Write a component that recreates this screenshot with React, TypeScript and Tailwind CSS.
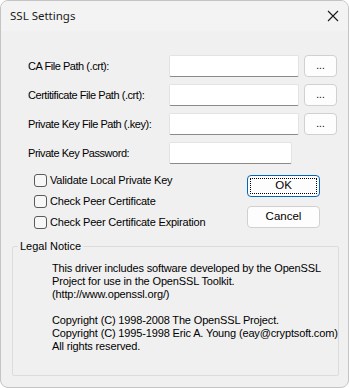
import React from "react";

const fieldRows = [
    { label: "CA File Path (.crt):", browse: true },
    { label: "Certitificate File Path (.crt):", browse: true },
    { label: "Private Key File Path (.key):", browse: true },
    { label: "Private Key Password:", browse: false },
];

const checks = [
    "Validate Local Private Key",
    "Check Peer Certificate",
    "Check Peer Certificate Expiration",
];

const legalLines = [
    "This driver includes software developed by the OpenSSL",
    "Project for use in the OpenSSL Toolkit.",
    "(http://www.openssl.org/)",
    "",
    "Copyright (C) 1998-2008 The OpenSSL Project.",
    "Copyright (C) 1995-1998 Eric A. Young (eay@cryptsoft.com)",
    "All rights reserved.",
];

const App = () => {
    return (
        <div className="w-[349px] h-[388px] bg-white">
            <div
                className="w-[349px] h-[388px] flex flex-col border border-[#c4c4c4] rounded-[8px] overflow-hidden bg-[#f0f0f0] text-[11px] text-black"
                style={{ fontFamily: '"Liberation Sans", Arial, sans-serif' }}
            >
                {/* title bar */}
                <div className="h-[30px] shrink-0 flex items-center justify-between bg-[#f3f3f3] pl-[9px] pr-[7px]">
                    <span className="text-[11.5px] text-[#1a1a1a]" style={{ fontFamily: '"Noto Sans", sans-serif' }}>SSL Settings</span>
                    <svg width="16" height="16" viewBox="0 0 16 16" className="text-[#1a1a1a]">
                        <path d="M3 3 L13 13 M13 3 L3 13" stroke="currentColor" strokeWidth="1.1" fill="none" />
                    </svg>
                </div>

                <div className="flex flex-col pt-[24px] pl-[27px]">
                    <div className="flex flex-col gap-[7px]">
                        {fieldRows.map((row) => (
                            <div key={row.label} className="flex items-center h-[22px]">
                                <span className="w-[141px] shrink-0 whitespace-nowrap tracking-[-0.45px]">{row.label}</span>
                                <div className={`${row.browse ? "w-[130px]" : "w-[123px]"} h-[22px] bg-white border border-[#e3e3e3] border-b-[#8a8a8a] rounded-[2px]`} />
                                {row.browse && (
                                    <div className="ml-[5px] w-[33px] h-[22px] flex items-center justify-center bg-[#fdfdfd] border border-[#d0d0d0] rounded-[4px] text-[10px] pb-[2px]">
                                        ...
                                    </div>
                                )}
                            </div>
                        ))}
                    </div>

                    <div className="flex mt-[6px]">
                        <div className="flex flex-col pl-[6px] w-[219px]">
                            {checks.map((c) => (
                                <div key={c} className="flex items-center h-[21px]">
                                    <div className="w-[13px] h-[13px] border border-[#5a5a5a] rounded-[3px] bg-[#f7f7f7]" />
                                    <span className="ml-[3px] whitespace-nowrap tracking-[-0.2px]">{c}</span>
                                </div>
                            ))}
                        </div>
                        <div className="flex flex-col gap-[9px] pt-[5px]">
                            <div className="w-[73px] h-[22px] border border-[#0067c0] rounded-[4px] bg-[#fdfdfd] p-[2px]">
                                <div className="w-full h-full border border-dotted border-black flex items-center justify-center text-[11.5px]">
                                    OK
                                </div>
                            </div>
                            <div className="w-[73px] h-[22px] border border-[#d0d0d0] rounded-[4px] bg-[#fdfdfd] flex items-center justify-center text-[11.5px]">
                                Cancel
                            </div>
                        </div>
                    </div>
                </div>

                <fieldset className="mx-[11px] mt-[7px] h-[136px] border border-[#dcdcdc] rounded-[2px]">
                    <legend className="ml-[5px] px-[2px] leading-[13px]">Legal Notice</legend>
                    <div className="flex flex-col pl-[39px] pt-[9px] leading-[13px] tracking-[-0.15px]">
                        {legalLines.map((line, i) => (
                            <div key={i} className="h-[13px] whitespace-nowrap">{line}</div>
                        ))}
                    </div>
                </fieldset>
            </div>
        </div>
    );
};

export default App;
